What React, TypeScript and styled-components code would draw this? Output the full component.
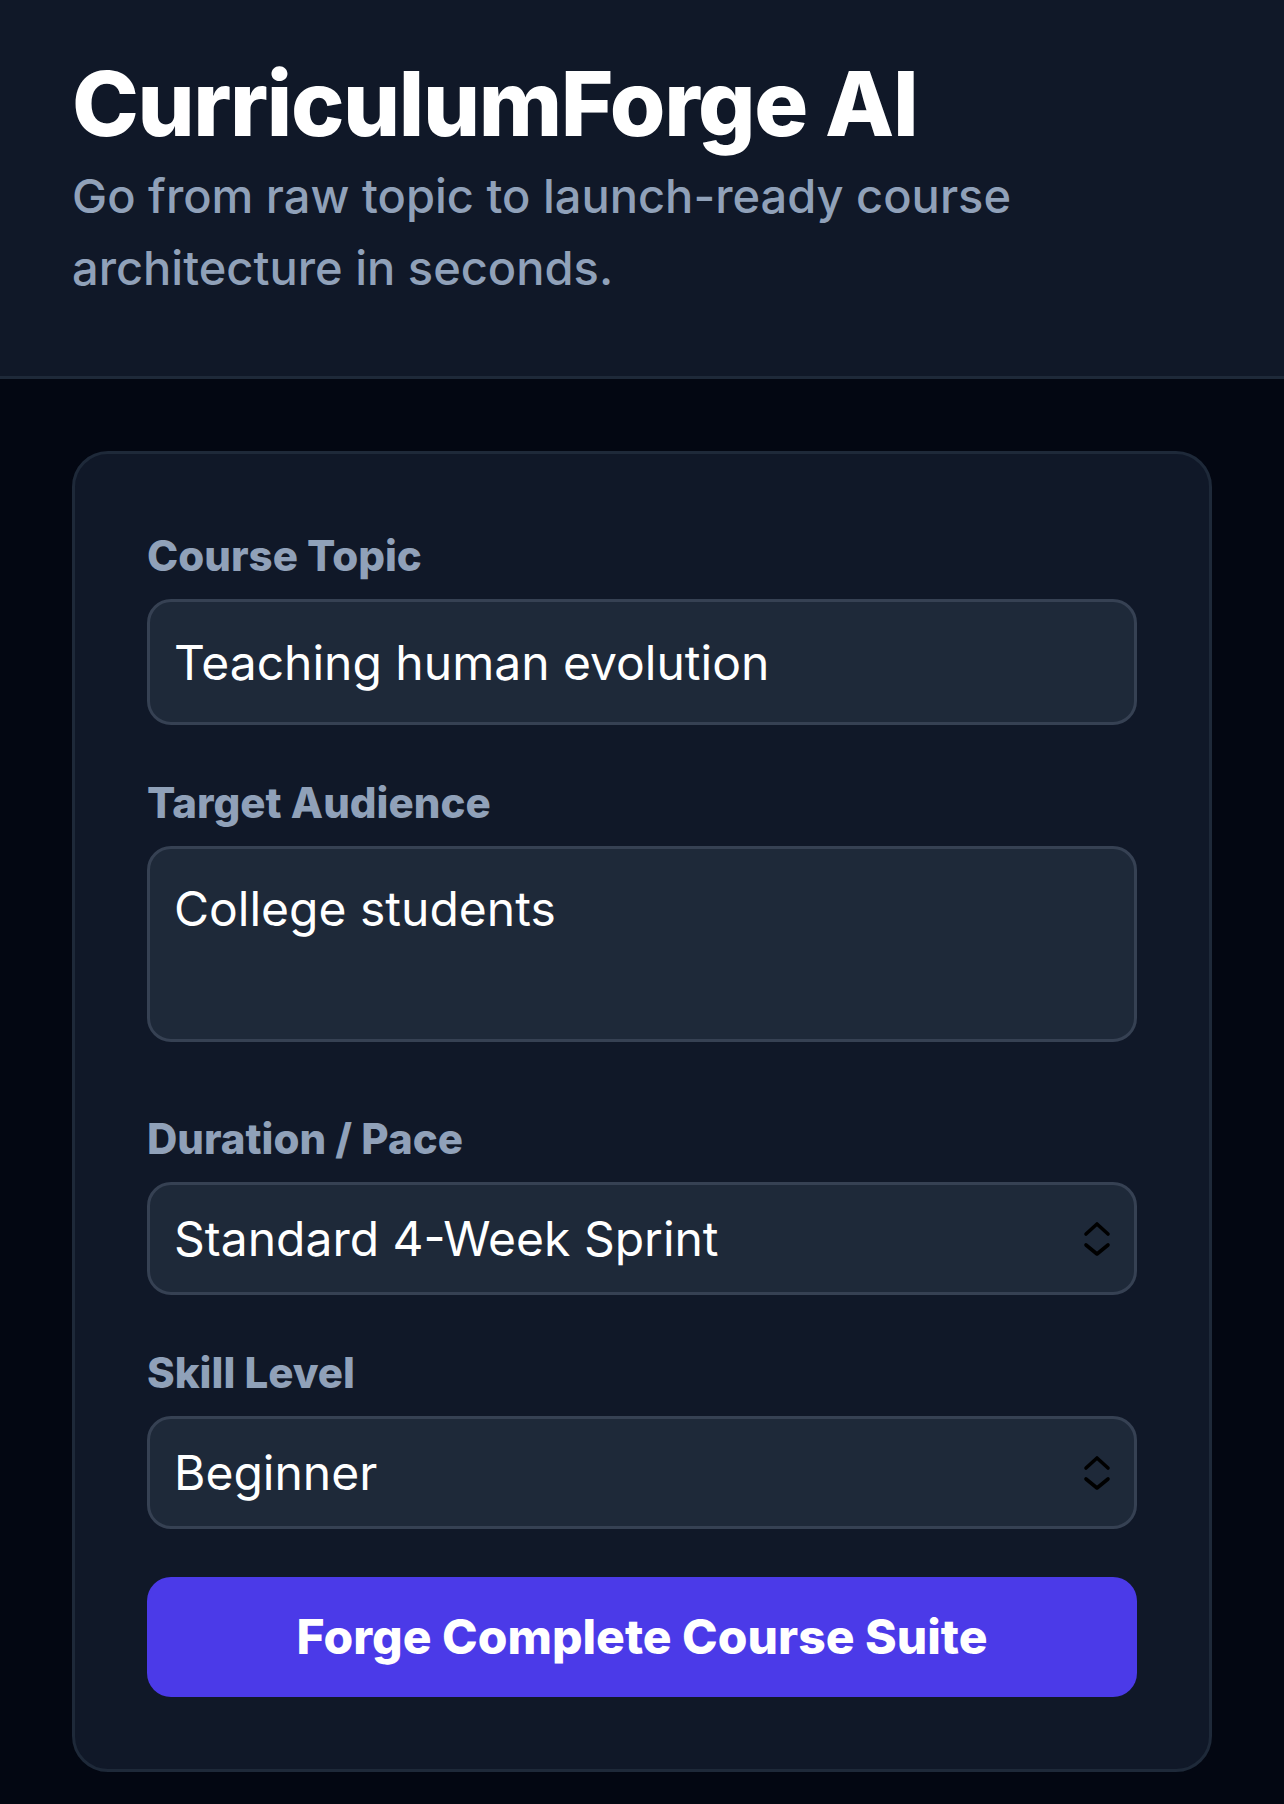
import { useState } from "react";
import styled, { createGlobalStyle } from "styled-components";

const GlobalStyle = createGlobalStyle`
  html, body {
    margin: 0;
    padding: 0;
    background: #030712;
  }
  body {
    font-family: Inter, "Noto Sans", "Liberation Sans", sans-serif;
    -webkit-font-smoothing: antialiased;
  }
  * {
    box-sizing: border-box;
  }
`;

const ChevronUpDown = () => (
    <svg width="30" height="38" viewBox="0 0 30 38" fill="none" stroke="#000" strokeWidth="3.6" strokeLinecap="round" strokeLinejoin="round">
        <path d="M4 14 L15 4 L26 14" />
        <path d="M4 25 L15 34 L26 25" />
    </svg>
);

export default function App() {
    const [topic, setTopic] = useState("Teaching human evolution");
    const [audience, setAudience] = useState("College students");
    const [duration, setDuration] = useState("Standard 4-Week Sprint");
    const [level, setLevel] = useState("Beginner");

    return (
        <Page>
            <GlobalStyle />
            <Header>
                <Title>CurriculumForge AI</Title>
                <Subtitle>Go from raw topic to launch-ready course architecture in seconds.</Subtitle>
            </Header>
            <Main>
                <Card>
                    <Field>
                        <Label>Course Topic</Label>
                        <TextInput value={topic} onChange={e => setTopic(e.target.value)} />
                    </Field>
                    <Field>
                        <Label>Target Audience</Label>
                        <TextArea value={audience} onChange={e => setAudience(e.target.value)} />
                    </Field>
                    <Field>
                        <Label>Duration / Pace</Label>
                        <SelectWrap>
                            <Select value={duration} onChange={e => setDuration(e.target.value)}>
                                <option>Quick 1-Week Intensive</option>
                                <option>Standard 4-Week Sprint</option>
                                <option>Extended 8-Week Program</option>
                                <option>Full Semester</option>
                            </Select>
                            <Arrow><ChevronUpDown /></Arrow>
                        </SelectWrap>
                    </Field>
                    <Field>
                        <Label>Skill Level</Label>
                        <SelectWrap>
                            <Select value={level} onChange={e => setLevel(e.target.value)}>
                                <option>Beginner</option>
                                <option>Intermediate</option>
                                <option>Advanced</option>
                            </Select>
                            <Arrow><ChevronUpDown /></Arrow>
                        </SelectWrap>
                    </Field>
                    <ForgeButton type="button">Forge Complete Course Suite</ForgeButton>
                </Card>
            </Main>
        </Page>
    );
}

const Page = styled.div`
    min-height: 100vh;
    background: #030712;
    display: flex;
    flex-direction: column;
`;

const Header = styled.header`
    background: #101828;
    border-bottom: 3px solid #1e2939;
    padding: 50px 72px 72px;
`;

const Title = styled.h1`
    margin: 0;
    font-size: 90px;
    line-height: 108px;
    font-weight: 800;
    letter-spacing: -1.4px;
    color: #ffffff;
`;

const Subtitle = styled.p`
    margin: 2px 0 0;
    max-width: 1060px;
    font-size: 47px;
    line-height: 72px;
    font-weight: 500;
    color: #90a1b9;
`;

const Main = styled.main`
    padding: 72px;
`;

const Card = styled.section`
    background: #101828;
    border: 3px solid #1e2939;
    border-radius: 36px;
    padding: 72px;
    display: flex;
    flex-direction: column;
    gap: 48px;
`;

const Field = styled.div`
    display: flex;
    flex-direction: column;
`;

const Label = styled.label`
    font-size: 42px;
    line-height: 60px;
    font-weight: 800;
    color: #90a1b9;
    margin-bottom: 13px;
`;

const fieldBase = `
    width: 100%;
    background: #1e2939;
    border: 3px solid #364153;
    border-radius: 24px;
    color: #ffffff;
    font-family: Inter, "Noto Sans", "Liberation Sans", sans-serif;
    font-size: 48px;
    line-height: 72px;
    font-weight: 400;
    outline: none;
`;

const TextInput = styled.input`
    ${fieldBase}
    height: 126px;
    padding: 24px;
`;

const TextArea = styled.textarea`
    ${fieldBase}
    display: block;
    height: 196px;
    padding: 24px;
    resize: none;
    margin-bottom: 19px;
`;

const SelectWrap = styled.div`
    position: relative;
`;

const Select = styled.select`
    ${fieldBase}
    height: 113px;
    padding: 0 80px 0 24px;
    appearance: none;
    -webkit-appearance: none;
`;

const Arrow = styled.span`
    position: absolute;
    right: 25px;
    top: 50%;
    transform: translateY(-50%);
    display: flex;
    pointer-events: none;
`;

const ForgeButton = styled.button`
    height: 120px;
    border: none;
    border-radius: 24px;
    background: #4b3ae8;
    color: #ffffff;
    font-family: Inter, "Noto Sans", "Liberation Sans", sans-serif;
    font-size: 48px;
    line-height: 72px;
    font-weight: 800;
    cursor: pointer;
`;
